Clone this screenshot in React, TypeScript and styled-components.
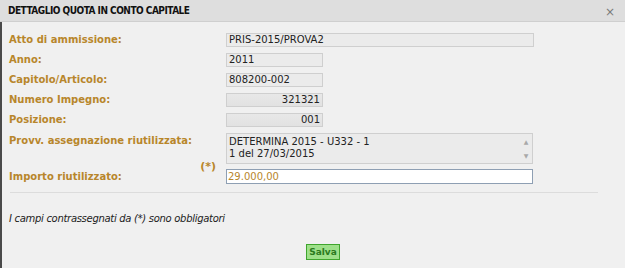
import React from 'react'
import styled, { createGlobalStyle } from 'styled-components'

const GlobalStyle = createGlobalStyle`
  html, body {
    margin: 0;
    padding: 0;
    background: #f0f0f0;
  }
  body {
    font-family: 'DejaVu Sans', Verdana, sans-serif;
    font-size: 11px;
  }
`

const Dialog = styled.div`
  width: 625px;
  height: 268px;
  background: #f0f0f0;
  overflow: hidden;
  display: flex;
  flex-direction: column;
`

const TitleBar = styled.div`
  height: 21px;
  background: #dedede;
  border-bottom: 1px solid #cfcfcf;
  display: flex;
  align-items: center;
  justify-content: space-between;
  padding: 0 10px 0 8px;
`

const Title = styled.span`
  font-family: 'DejaVu Sans Condensed', 'DejaVu Sans', sans-serif;
  font-weight: bold;
  font-size: 10px;
  color: #111;
  letter-spacing: -0.5px;
`

const Close = styled.span`
  color: #7a7a7a;
  font-size: 12px;
  line-height: 1;
  margin-top: 3px;
`

const Body = styled.div`
  flex: 1;
  border-left: 2px solid #4a4a4a;
  padding: 11px 0 0 7px;
`

const Form = styled.div`
  display: grid;
  grid-template-columns: 217px 308px;
  row-gap: 6px;
  align-items: center;
`

const Label = styled.span`
  font-weight: bold;
  font-size: 10px;
  line-height: 12px;
  color: #b8862b;
`

const Field = styled.div<{ $width: number; $right?: boolean }>`
  width: ${({ $width }) => $width}px;
  height: 14px;
  box-sizing: border-box;
  border: 1px solid #cfcfcf;
  background: ${({ $right }) => ($right ? 'linear-gradient(#e8e8e8, #e2e2e2)' : '#ebebeb')};
  color: #222;
  font-size: 10px;
  line-height: 12px;
  padding: 0 2px;
  text-align: ${({ $right }) => ($right ? 'right' : 'left')};
  white-space: nowrap;
`

const AreaRow = styled.div`
  display: grid;
  grid-template-columns: 217px 308px;
  margin-top: 6px;
`

const AreaLabel = styled(Label)`
  padding-top: 2px;
`

const TextArea = styled.div`
  width: 307px;
  height: 31px;
  box-sizing: border-box;
  border: 1px solid #cfcfcf;
  background: #ebebeb;
  display: flex;
  color: #222;
  font-size: 10px;
  line-height: 12px;
`

const AreaText = styled.div`
  flex: 1;
  padding: 2px 2px;
`

const ScrollBar = styled.div`
  width: 12px;
  display: flex;
  flex-direction: column;
  justify-content: space-between;
  align-items: center;
  padding: 5px 0 4px;
  color: #a8a8a8;
  font-size: 6px;
  line-height: 6px;
`

const ImportoRow = styled.div`
  display: grid;
  grid-template-columns: 217px 308px;
  align-items: end;
  margin-top: 5px;
`

const ImportoLabel = styled.div`
  display: flex;
  justify-content: space-between;
  align-items: flex-end;
  padding-right: 10px;
  padding-bottom: 1px;
`

const Required = styled(Label)`
  position: relative;
  top: -10px;
  font-size: 11px;
`

const Input = styled.div`
  width: 307px;
  height: 15px;
  box-sizing: border-box;
  border: 1px solid #8e9fb3;
  background: #ffffff;
  color: #b8862b;
  font-size: 10px;
  line-height: 13px;
  padding: 0 1px;
`

const Divider = styled.div`
  margin: 8px 27px 0 1px;
  border-top: 1px solid #dcdcdc;
`

const Note = styled.div`
  margin-top: 20px;
  font-style: italic;
  font-size: 10px;
  letter-spacing: -0.3px;
  color: #222;
`

const Footer = styled.div`
  display: flex;
  justify-content: center;
  margin-top: 20px;
  padding-left: 12px;
`

const SaveButton = styled.button`
  font-family: inherit;
  font-weight: bold;
  font-size: 9px;
  color: #2b7a1e;
  background: #9ee08a;
  border: 1px solid #3fa52d;
  padding: 1px 2px;
  height: 16px;
  line-height: 12px;
`

export default function App() {
  return (
    <Dialog>
      <GlobalStyle />
      <TitleBar>
        <Title>DETTAGLIO QUOTA IN CONTO CAPITALE</Title>
        <Close>×</Close>
      </TitleBar>
      <Body>
        <Form>
          <Label>Atto di ammissione:</Label>
          <Field $width={308}>PRIS-2015/PROVA2</Field>
          <Label>Anno:</Label>
          <Field $width={97}>2011</Field>
          <Label>Capitolo/Articolo:</Label>
          <Field $width={97}>808200-002</Field>
          <Label>Numero Impegno:</Label>
          <Field $width={97} $right>321321</Field>
          <Label>Posizione:</Label>
          <Field $width={97} $right>001</Field>
        </Form>
        <AreaRow>
          <AreaLabel>Provv. assegnazione riutilizzata:</AreaLabel>
          <TextArea>
            <AreaText>
              DETERMINA 2015 - U332 - 1
              <br />1 del 27/03/2015
            </AreaText>
            <ScrollBar>
              <span>▲</span>
              <span>▼</span>
            </ScrollBar>
          </TextArea>
        </AreaRow>
        <ImportoRow>
          <ImportoLabel>
            <Label>Importo riutilizzato:</Label>
            <Required>(*)</Required>
          </ImportoLabel>
          <Input>29.000,00</Input>
        </ImportoRow>
        <Divider />
        <Note>I campi contrassegnati da (*) sono obbligatori</Note>
        <Footer>
          <SaveButton>Salva</SaveButton>
        </Footer>
      </Body>
    </Dialog>
  )
}
